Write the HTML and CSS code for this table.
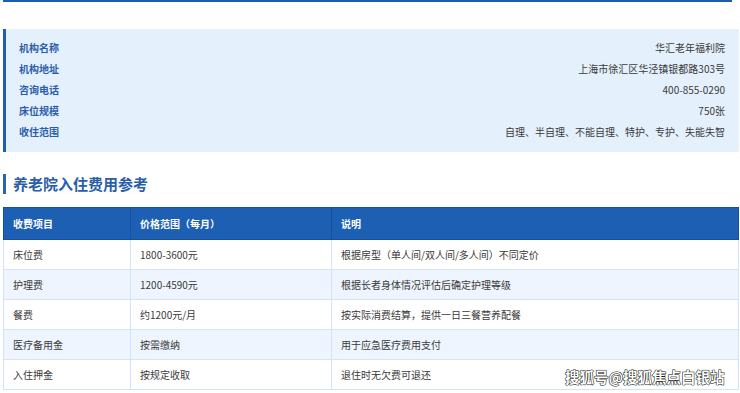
FILE: index.html
```html
<!DOCTYPE html>
<html lang="zh">
<head>
<meta charset="utf-8">
<link rel="stylesheet" href="styles.css">
</head>
<body>
<div class="page">
  <div class="topline"></div>
  <div class="info">
    <div class="info-row"><span class="label">机构名称</span><span class="value">华汇老年福利院</span></div>
    <div class="info-row"><span class="label">机构地址</span><span class="value">上海市徐汇区华泾镇银都路303号</span></div>
    <div class="info-row"><span class="label">咨询电话</span><span class="value">400-855-0290</span></div>
    <div class="info-row"><span class="label">床位规模</span><span class="value">750张</span></div>
    <div class="info-row"><span class="label">收住范围</span><span class="value">自理、半自理、不能自理、特护、专护、失能失智</span></div>
  </div>
  <h2 class="title">养老院入住费用参考</h2>
  <table class="fees">
    <thead>
      <tr><th class="c1">收费项目</th><th class="c2">价格范围（每月）</th><th class="c3">说明</th></tr>
    </thead>
    <tbody>
      <tr><td>床位费</td><td>1800-3600元</td><td>根据房型（单人间/双人间/多人间）不同定价</td></tr>
      <tr><td>护理费</td><td>1200-4590元</td><td>根据长者身体情况评估后确定护理等级</td></tr>
      <tr><td>餐费</td><td>约1200元/月</td><td>按实际消费结算，提供一日三餐营养配餐</td></tr>
      <tr><td>医疗备用金</td><td>按需缴纳</td><td>用于应急医疗费用支付</td></tr>
      <tr><td>入住押金</td><td>按规定收取</td><td>退住时无欠费可退还</td></tr>
    </tbody>
  </table>
  <div class="watermark">搜狐号@搜狐焦点白银站</div>
</div>
</body>
</html>
```
FILE: styles.css
```css
* { box-sizing: border-box; }
html, body { margin: 0; padding: 0; background: #fff; }
body {
  font-family: "Noto Sans CJK SC", "Noto Sans", sans-serif;
  font-size: 10px;
  color: #333;
  overflow: hidden;
}
.page {
  position: relative;
  width: 740px;
  height: 393px;
  padding-left: 3px;
  overflow: hidden;
}
.topline {
  height: 2px;
  width: 729px;
  background: #1b5cb4;
}
.info {
  margin-top: 27px;
  width: 736px;
  background: #e5f0fd;
  border-left: 3px solid #1f5fb0;
  padding: 8px 14px 10px 13px;
}
.info-row {
  display: flex;
  justify-content: space-between;
  align-items: center;
  height: 21px;
  line-height: 21px;
}
.label {
  font-weight: bold;
  color: #2a5ea9;
}
.value {
  color: #3a3a3a;
}
.title {
  margin: 22px 0 0 0;
  height: 20px;
  line-height: 20px;
  border-left: 3px solid #2a64b0;
  padding-left: 7px;
  font-size: 15px;
  font-weight: bold;
  color: #2a5ea9;
}
.fees {
  margin-top: 13px;
  width: 736px;
  border-collapse: collapse;
  table-layout: fixed;
}
.fees th, .fees td {
  text-align: left;
  padding: 0 9px;
  border: 1px solid #d3e4f8;
}
.fees th {
  height: 32px;
  background: #1c5fb3;
  color: #fff;
  font-weight: bold;
  border-color: #174f9a;
}
.fees td {
  height: 30px;
  color: #3a3a3a;
}
.fees tbody tr:nth-child(even) td { background: #eef5fe; }
.c1 { width: 127px; }
.c2 { width: 201px; }
.watermark {
  position: absolute;
  left: 565px;
  top: 366px;
  line-height: 22px;
  white-space: nowrap;
  font-size: 14.5px;
  font-weight: bold;
  color: #fff;
  -webkit-text-stroke: 0.8px #222;
  paint-order: stroke fill;
  text-shadow: 0 0 1px #000;
}
```
